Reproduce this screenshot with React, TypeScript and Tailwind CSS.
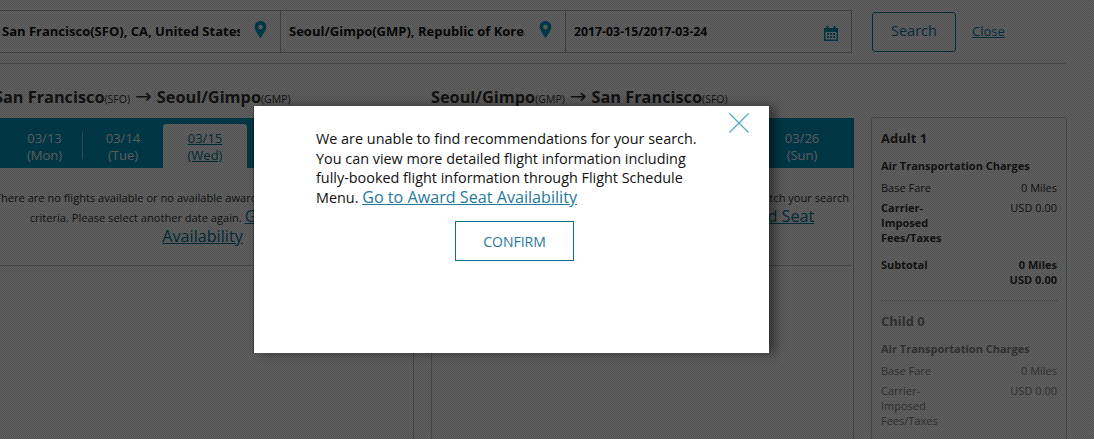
const Pin = () => (
  <svg width="13" height="18" viewBox="0 0 14 20" className="shrink-0">
    <path fillRule="evenodd" d="M7 0C3 0 .5 3 .5 6.5 .5 11 5 15.500 7 19.500 9 15.500 13.500 11 13.500 6.500 13.500 3 11 0 7 0ZM7 4.200A2.600 2.600 0 1 1 7 9.400 2.600 2.600 0 1 1 7 4.200Z" fill="#00a0c8" />
  </svg>
);

const Calendar = () => (
  <svg width="14" height="15" viewBox="0 0 14 15" className="shrink-0">
    <path fillRule="evenodd" d="M0 2h2.500V0h2v2h5V0h2v2H14v13H0ZM1.500 6v7.500h11V6Z" fill="#0098b8" />
    <path d="M3 7h2v2H3zM6 7h2v2H6zM9 7h2v2H9zM3 10h2v2H3zM6 10h2v2H6zM9 10h2v2H9z" fill="#0098b8" />
  </svg>
);

type Tab = { date: string; day: string; cls: string; active?: boolean };

const TabCell = ({ date, day, cls, active }: Tab) => (
  <div className={`${cls} shrink-0 h-full flex items-end`}>
    {active ? (
      <div className="w-full h-[44px] bg-white rounded-t-[3px] text-center text-[#00789e] underline text-[13px] leading-[17px] pt-[6px]">
        {date}
        <br />
        {day}
      </div>
    ) : (
      <div className="w-full h-[38px] mb-[3px] text-center text-white text-[13px] leading-[17px] pt-[3px]">
        {date}
        <br />
        {day}
      </div>
    )}
  </div>
);

const Heading = ({ a, ac, b, bc, cls }: { a: string; ac: string; b: string; bc: string; cls: string }) => (
  <div className={`${cls} h-[20px] flex items-baseline whitespace-nowrap text-[#333333]`}>
    <span className="font-bold text-[16.300px] leading-[20px]">{a}</span>
    <span className="text-[10.500px]">{ac}</span>
    <span className="text-[20px] leading-[20px] mx-[5px] font-['DejaVu_Sans']">→</span>
    <span className="font-bold text-[16.300px] leading-[20px]">{b}</span>
    <span className="text-[10.500px]">{bc}</span>
  </div>
);

const Message = ({ cls }: { cls: string }) => (
  <div className={`${cls} h-[98px] border-b border-[#c4c4c4] pt-[20px] text-center text-[11.100px] leading-[19px] text-[#333333]`}>
    There are no flights available or no available award seats that match your search
    <br />
    criteria. Please select another date again.{" "}
    <a className="text-[16.200px] text-[#00789e] underline">Go to Award Seat Availability</a>
  </div>
);

const FareRow = ({ label, value, bold, multi }: { label: string; value: string; bold?: boolean; multi?: boolean }) => (
  <div className={`flex justify-between text-[11px] leading-[15px] ${multi ? "mt-[5px]" : "mt-[7px]"}`}>
    <div className={`${bold ? "font-bold" : ""} w-[70px]`}>{label}</div>
    <div className="text-right">{value}</div>
  </div>
);

const FareBlock = ({ title, tone, last }: { title: string; tone: string; last?: boolean }) => (
  <div className={`${tone} ${last ? "" : "border-b border-dotted border-[#aaaaaa] pb-[13px]"}`}>
    <div className="font-bold text-[13px] leading-[18px]">{title}</div>
    <div className="font-bold text-[11px] leading-[15px] mt-[11px]">Air Transportation Charges</div>
    <FareRow label="Base Fare" value="0 Miles" />
    <FareRow label="Carrier-Imposed Fees/Taxes" value="USD 0.00" multi bold={!last} />
    {!last && (
      <div className="flex justify-between font-bold text-[11px] leading-[15px] mt-[12px]">
        <div>Subtotal</div>
        <div className="text-right">
          0 Miles
          <br />
          USD 0.00
        </div>
      </div>
    )}
  </div>
);

export default function App() {
  const leftTabs: Tab[] = [
    { date: "03/13", day: "(Mon)", cls: "w-[77px]" },
    { date: "03/14", day: "(Tue)", cls: "w-[80px]" },
    { date: "03/15", day: "(Wed)", cls: "w-[84px]", active: true },
  ];

  return (
    <div className="relative w-[1094px] h-[439px] overflow-hidden bg-white font-['Open_Sans',sans-serif]">
      <div className="w-[1076px] -ml-[10px] pt-[10px]">
        {/* search bar */}
        <div className="flex items-center">
          <div className="w-[862px] h-[43px] border border-[#b4b4b4] flex items-center shrink-0 text-[#111111] font-bold text-[13px]">
            <div className="w-[290px] h-[41px] border-r border-[#b4b4b4] flex items-center pl-[11px] shrink-0">
              <div className="w-[238px] overflow-hidden whitespace-nowrap">San Francisco(SFO), CA, United States</div>
              <div className="ml-[14px] mb-[3px]"><Pin /></div>
            </div>
            <div className="w-[285px] h-[41px] border-r border-[#b4b4b4] flex items-center pl-[8px] shrink-0">
              <div className="w-[236px] overflow-hidden whitespace-nowrap">Seoul/Gimpo(GMP), Republic of Korea</div>
              <div className="ml-[14px] mb-[3px]"><Pin /></div>
            </div>
            <div className="flex-1 h-[41px] flex items-center justify-between pl-[8px] pr-[13px]">
              <span className="pt-[2px] text-[12.300px]">2017-03-15/2017-03-24</span>
              <span className="pt-[3px]"><Calendar /></span>
            </div>
          </div>
          <button className="ml-[20px] w-[84px] h-[40px] border border-[#0a7fa5] rounded-[3px] text-[#0a7fa5] text-[14.500px] pb-[1px]">Search</button>
          <a className="ml-[16px] text-[13px] underline text-[#0a7fa5]">Close</a>
        </div>

        <div className="h-px bg-[#c8c8c8] mt-[10px]" />

        {/* route headings */}
        <div className="flex mt-[22px]">
          <Heading cls="w-[437px] ml-[4px] shrink-0" a="San Francisco" ac="(SFO)" b="Seoul/Gimpo" bc="(GMP)" />
          <Heading cls="" a="Seoul/Gimpo" ac="(GMP)" b="San Francisco" bc="(SFO)" />
        </div>

        {/* content columns */}
        <div className="flex mt-[12px] items-start">
          <div className="w-[424px] h-[330px] border-r border-[#c4c4c4] shrink-0">
            <div className="relative flex h-[50px] bg-[#0098c4] pl-[16px]">
              {leftTabs.map((t) => <TabCell key={t.date} {...t} />)}
              <span className="absolute left-[92px] top-[14px] h-[27px] w-px bg-[#7fd0ec]" />
            </div>
            <Message cls="pl-[2px]" />
          </div>
          <div className="w-[423px] h-[330px] ml-[17px] border-x border-[#c4c4c4] shrink-0">
            <div className="flex justify-end h-[50px] bg-[#0098c4] -mx-px pr-[12px] overflow-hidden">
              <TabCell date="03/26" day="(Sun)" cls="w-[80px]" />
            </div>
            <Message cls="mr-[2px]" />
          </div>
          <div className="ml-[17px] w-[196px] h-[340px] border border-[#b9cdd4] rounded-[3px] px-[9px] pt-[11px] shrink-0 -mt-px overflow-hidden">
            <FareBlock title="Adult 1" tone="text-[#333333]" />
            <div className="mt-[11px]">
              <FareBlock title="Child 0" tone="text-[#888888]" last />
            </div>
          </div>
        </div>
      </div>

      {/* dim layer and dialog */}
      <div className="absolute inset-0 bg-[repeating-conic-gradient(rgba(0,0,0,0.62)_0_25%,rgba(0,0,0,0.68)_0_50%)] bg-[length:2px_2px] pl-[254px] pt-[106px]">
        <div className="relative w-[515px] h-[247px] bg-white shadow-[6px_0_10px_rgba(0,0,0,0.45),-1px_0_0_rgba(0,0,0,0.3)] pl-[62px] pt-[23px]">
          <button className="absolute right-[20px] top-[7px] text-[#48a9c5]" aria-label="Close">
            <svg width="20" height="20" viewBox="0 0 20 20" fill="none" stroke="currentColor" strokeWidth="1.100">
              <path d="M0.500 0.500 19.500 19.500M19.500 0.500 0.500 19.500" />
            </svg>
          </button>
          <p className="w-[400px] text-[14.400px] leading-[19.500px] text-[#111111]">
            We are unable to find recommendations for your search. You can view more detailed flight information including fully-booked flight information through Flight Schedule Menu.{" "}
            <a className="text-[16.150px] text-[#1f7a9c] underline">Go to Award Seat Availability</a>
          </p>
          <button className="block mt-[14px] ml-[139px] w-[119px] h-[40px] border border-[#0f6d8e] text-[14px] text-[#1f7a9c]">CONFIRM</button>
        </div>
      </div>
    </div>
  );
}
